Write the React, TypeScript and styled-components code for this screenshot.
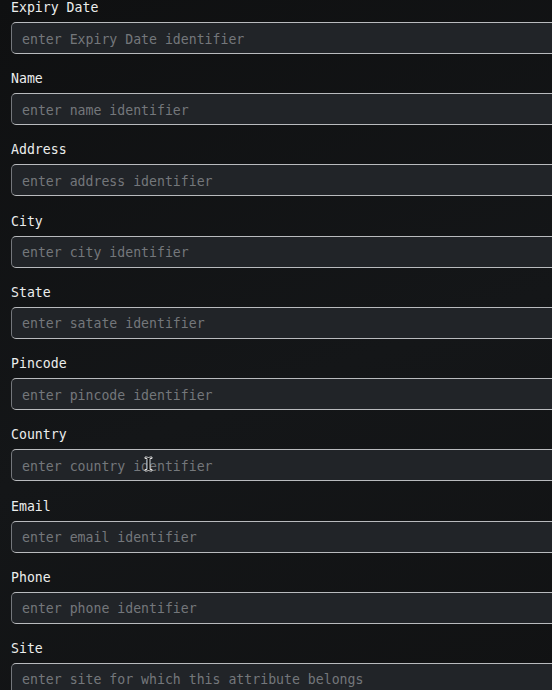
import React from 'react';
import styled, { createGlobalStyle } from 'styled-components';

const GlobalStyle = createGlobalStyle`
  html, body {
    margin: 0;
    padding: 0;
    overflow: hidden;
    background: #111214;
  }
  body {
    font-family: 'DejaVu Sans Mono', 'Liberation Mono', monospace;
  }
`;

const Page = styled.div`
  position: relative;
  width: 552px;
  height: 690px;
  overflow: hidden;
  background: linear-gradient(160deg, #0f1011 0%, #141618 55%, #111213 100%);
`;

const Form = styled.form`
  display: flex;
  flex-direction: column;
  gap: 13.22px;
  margin-top: -4px;
  padding-left: 11px;
  width: 580px;
`;

const Field = styled.div`
  display: flex;
  flex-direction: column;
  gap: 5px;
`;

const Label = styled.label`
  font-size: 13.2px;
  line-height: 21px;
  padding-top: 1px;
  margin-bottom: -1px;
  color: #eceded;
`;

const Input = styled.input`
  box-sizing: border-box;
  height: 32px;
  width: 100%;
  padding: 2px 10px 0;
  border-radius: 5px;
  border: 1px solid #b9bbbe;
  border-left-color: #74777c;
  background: #212428;
  color: #e8e9ea;
  font-family: inherit;
  font-size: 13.2px;
  outline: none;

  &::placeholder {
    color: #74777b;
  }
`;

const Cursor = styled.svg`
  position: absolute;
  left: 144px;
  top: 456px;
  pointer-events: none;
`;

const fields = [
  ['Expiry Date', 'enter Expiry Date identifier'],
  ['Name', 'enter name identifier'],
  ['Address', 'enter address identifier'],
  ['City', 'enter city identifier'],
  ['State', 'enter satate identifier'],
  ['Pincode', 'enter pincode identifier'],
  ['Country', 'enter country identifier'],
  ['Email', 'enter email identifier'],
  ['Phone', 'enter phone identifier'],
  ['Site', 'enter site for which this attribute belongs'],
];

export default function App() {
  return (
    <Page>
      <GlobalStyle />
      <Form>
        {fields.map(([label, placeholder]) => (
          <Field key={label}>
            <Label>{label}</Label>
            <Input placeholder={placeholder} />
          </Field>
        ))}
      </Form>
      <Cursor width="9" height="16" viewBox="0 0 9 16">
        <path
          d="M1 1h2.5l1 1 1-1H8v1.5H6v11h2V15H5.5l-1-1-1 1H1v-1.5h2v-11H1z"
          fill="#111"
          stroke="#fff"
          strokeWidth="0.8"
        />
      </Cursor>
    </Page>
  );
}
